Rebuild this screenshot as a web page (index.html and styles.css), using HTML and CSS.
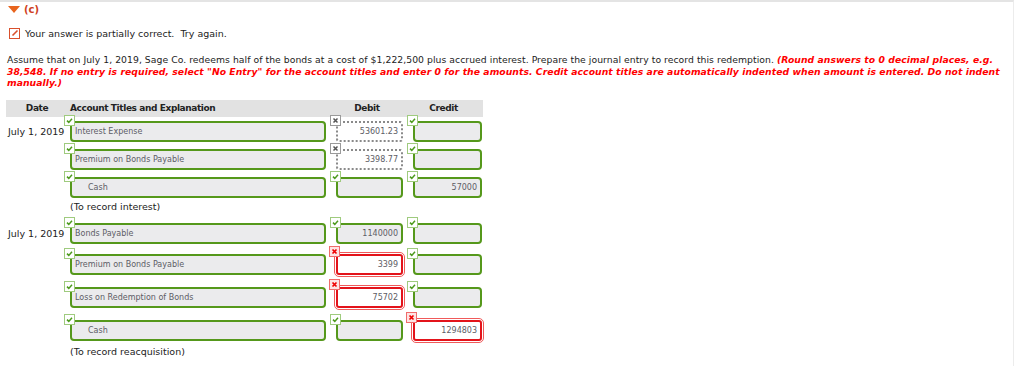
FILE: index.html
```html
<!DOCTYPE html>
<html lang="en">
<head>
    <meta charset="UTF-8">
    <meta name="viewport" content="width=device-width, initial-scale=1.0">
    <title>Question (c)</title>
    <link rel="stylesheet" href="styles.css">
</head>
<body>

    <div class="page">

        <div class="part-head">
            <span class="part-head__caret"></span>
            <span class="part-head__label">(c)</span>
        </div>

        <div class="status">
            <span class="status__icon">
                <svg width="8" height="8" viewBox="0 0 8 8"><path d="M1.5 6.5 L6.5 1.5" stroke="#d9502c" stroke-width="1.6"/></svg>
            </span>
            <span>Your answer is partially correct.&nbsp; Try again.</span>
        </div>

        <p class="prompt">
            Assume that on July 1, 2019, Sage Co. redeems half of the bonds at a cost of $1,222,500 plus accrued interest. Prepare the journal entry to record this redemption.
            <em class="prompt__hint">(Round answers to 0 decimal places, e.g. 38,548. If no entry is required, select "No Entry" for the account titles and enter 0 for the amounts. Credit account titles are automatically indented when amount is entered. Do not indent manually.)</em>
        </p>

        <div class="journal">
            <div class="journal__head">
                <div class="col-date">Date</div>
                <div class="col-acct">Account Titles and Explanation</div>
                <div class="col-debit">Debit</div>
                <div class="col-credit">Credit</div>
            </div>

            <!-- entry 1 -->
            <div class="entry-row">
                <div class="cell-date">July 1, 2019</div>
                <div class="field field--acct">
                    <span class="mark mark--ok"><svg viewBox="0 0 9 9"><path d="M2 4.6 L3.8 6.4 L7 2.8"/></svg></span>
                    <div class="box">Interest Expense</div>
                </div>
                <div class="field field--debit">
                    <span class="mark mark--na"><svg viewBox="0 0 9 9"><path d="M2.5 2.5 L6.5 6.5 M6.5 2.5 L2.5 6.5"/></svg></span>
                    <div class="box box--dotted">53601.23</div>
                </div>
                <div class="field field--credit">
                    <span class="mark mark--ok"><svg viewBox="0 0 9 9"><path d="M2 4.6 L3.8 6.4 L7 2.8"/></svg></span>
                    <div class="box"></div>
                </div>
            </div>
            <div class="entry-row">
                <div class="cell-date"></div>
                <div class="field field--acct">
                    <span class="mark mark--ok"><svg viewBox="0 0 9 9"><path d="M2 4.6 L3.8 6.4 L7 2.8"/></svg></span>
                    <div class="box">Premium on Bonds Payable</div>
                </div>
                <div class="field field--debit">
                    <span class="mark mark--na"><svg viewBox="0 0 9 9"><path d="M2.5 2.5 L6.5 6.5 M6.5 2.5 L2.5 6.5"/></svg></span>
                    <div class="box box--dotted">3398.77</div>
                </div>
                <div class="field field--credit">
                    <span class="mark mark--ok"><svg viewBox="0 0 9 9"><path d="M2 4.6 L3.8 6.4 L7 2.8"/></svg></span>
                    <div class="box"></div>
                </div>
            </div>
            <div class="entry-row">
                <div class="cell-date"></div>
                <div class="field field--acct">
                    <span class="mark mark--ok"><svg viewBox="0 0 9 9"><path d="M2 4.6 L3.8 6.4 L7 2.8"/></svg></span>
                    <div class="box box--indent">Cash</div>
                </div>
                <div class="field field--debit">
                    <span class="mark mark--ok"><svg viewBox="0 0 9 9"><path d="M2 4.6 L3.8 6.4 L7 2.8"/></svg></span>
                    <div class="box"></div>
                </div>
                <div class="field field--credit">
                    <span class="mark mark--ok"><svg viewBox="0 0 9 9"><path d="M2 4.6 L3.8 6.4 L7 2.8"/></svg></span>
                    <div class="box">57000</div>
                </div>
            </div>
            <div class="entry-note">(To record interest)</div>

            <!-- entry 2 -->
            <div class="entry-row">
                <div class="cell-date">July 1, 2019</div>
                <div class="field field--acct">
                    <span class="mark mark--ok"><svg viewBox="0 0 9 9"><path d="M2 4.6 L3.8 6.4 L7 2.8"/></svg></span>
                    <div class="box">Bonds Payable</div>
                </div>
                <div class="field field--debit">
                    <span class="mark mark--ok"><svg viewBox="0 0 9 9"><path d="M2 4.6 L3.8 6.4 L7 2.8"/></svg></span>
                    <div class="box">1140000</div>
                </div>
                <div class="field field--credit">
                    <span class="mark mark--ok"><svg viewBox="0 0 9 9"><path d="M2 4.6 L3.8 6.4 L7 2.8"/></svg></span>
                    <div class="box"></div>
                </div>
            </div>
            <div class="entry-row entry-row--err">
                <div class="cell-date"></div>
                <div class="field field--acct">
                    <span class="mark mark--ok"><svg viewBox="0 0 9 9"><path d="M2 4.6 L3.8 6.4 L7 2.8"/></svg></span>
                    <div class="box">Premium on Bonds Payable</div>
                </div>
                <div class="field field--debit">
                    <span class="mark mark--bad"><svg viewBox="0 0 9 9"><path d="M2.5 2.5 L6.5 6.5 M6.5 2.5 L2.5 6.5"/></svg></span>
                    <div class="box box--wrong">3399</div>
                </div>
                <div class="field field--credit">
                    <span class="mark mark--ok"><svg viewBox="0 0 9 9"><path d="M2 4.6 L3.8 6.4 L7 2.8"/></svg></span>
                    <div class="box"></div>
                </div>
            </div>
            <div class="entry-row entry-row--err">
                <div class="cell-date"></div>
                <div class="field field--acct">
                    <span class="mark mark--ok"><svg viewBox="0 0 9 9"><path d="M2 4.6 L3.8 6.4 L7 2.8"/></svg></span>
                    <div class="box">Loss on Redemption of Bonds</div>
                </div>
                <div class="field field--debit">
                    <span class="mark mark--bad"><svg viewBox="0 0 9 9"><path d="M2.5 2.5 L6.5 6.5 M6.5 2.5 L2.5 6.5"/></svg></span>
                    <div class="box box--wrong">75702</div>
                </div>
                <div class="field field--credit">
                    <span class="mark mark--ok"><svg viewBox="0 0 9 9"><path d="M2 4.6 L3.8 6.4 L7 2.8"/></svg></span>
                    <div class="box"></div>
                </div>
            </div>
            <div class="entry-row entry-row--err">
                <div class="cell-date"></div>
                <div class="field field--acct">
                    <span class="mark mark--ok"><svg viewBox="0 0 9 9"><path d="M2 4.6 L3.8 6.4 L7 2.8"/></svg></span>
                    <div class="box box--indent">Cash</div>
                </div>
                <div class="field field--debit">
                    <span class="mark mark--ok"><svg viewBox="0 0 9 9"><path d="M2 4.6 L3.8 6.4 L7 2.8"/></svg></span>
                    <div class="box"></div>
                </div>
                <div class="field field--credit">
                    <span class="mark mark--bad"><svg viewBox="0 0 9 9"><path d="M2.5 2.5 L6.5 6.5 M6.5 2.5 L2.5 6.5"/></svg></span>
                    <div class="box box--wrong">1294803</div>
                </div>
            </div>
            <div class="entry-note">(To record reacquisition)</div>
        </div>

    </div>

</body>
</html>
```

FILE: styles.css
```css
*,
*::before,
*::after {
    box-sizing: border-box;
}

body {
    font-family: "DejaVu Sans", Verdana, sans-serif;
    font-size: 9.25px;
    color: #222;
    margin: 0;
    padding: 0;
    background-color: #fff;
}

p {
    margin: 0;
}

.page {
    border-top: 2px solid #e4e4e4;
    border-right: 1px solid #ececec;
    width: 1014px;
    height: 366px;
    padding: 0 6px;
}

.part-head {
    display: flex;
    align-items: center;
    gap: 4px;
    height: 14px;
    padding-left: 2px;
}

.part-head__caret {
    width: 0;
    height: 0;
    border-left: 6px solid transparent;
    border-right: 6px solid transparent;
    border-top: 7px solid #e8641e;
}

.part-head__label {
    color: #cf3f22;
    font-weight: bold;
    font-size: 10px;
}

.status {
    display: flex;
    align-items: center;
    gap: 5px;
    margin-top: 10px;
    padding-left: 3px;
    height: 14px;
    font-size: 9.5px;
}

.status__icon {
    width: 11px;
    height: 11px;
    border: 1px solid #d9502c;
    display: flex;
    align-items: center;
    justify-content: center;
}

.prompt {
    margin-top: 14px;
    padding-left: 1px;
    line-height: 11.5px;
    letter-spacing: 0.05px;
}

.prompt__hint {
    color: #f00;
    font-weight: bold;
}

/* journal table */
.journal {
    margin-top: 11px;
}

.journal__head {
    display: flex;
    width: 477px;
    height: 17px;
    line-height: 17px;
    background-color: #e2e2e2;
    font-weight: bold;
    font-size: 9px;
    letter-spacing: -0.4px;
    margin-bottom: -3px;
}

.col-date {
    width: 62px;
    text-align: center;
}

.col-acct {
    width: 262px;
    padding-left: 2px;
}

.col-debit {
    width: 74px;
    text-align: center;
}

.col-credit {
    width: 79px;
    text-align: center;
}

.entry-row {
    display: flex;
    margin-top: 1px;
}

.entry-row--err {
    padding: 3px 0 2px;
}

.cell-date {
    width: 58px;
    padding: 6px 0 0 2px;
    line-height: 21px;
    font-size: 9.5px;
    white-space: nowrap;
}

.field {
    position: relative;
    padding: 6px 0 0 6px;
    margin-left: 4px;
}

.field--acct {
    margin-left: 0;
}

.field--acct .box {
    width: 256px;
}

.field--debit .box {
    width: 67px;
    text-align: right;
}

.field--credit .box {
    width: 69px;
    text-align: right;
}

.box {
    height: 21px;
    line-height: 17px;
    padding: 0 3px;
    border: 2px solid #55981b;
    border-radius: 4px;
    background-color: #ebebed;
    color: #5d5d66;
    font-size: 8px;
    white-space: nowrap;
    overflow: hidden;
}

.box--indent {
    padding-left: 16px;
}

.box--dotted {
    border: 2px dotted #8a8a8a;
    border-radius: 3px;
    background-color: #fff;
}

.box--wrong {
    border-color: #e3141b;
    border-radius: 3px;
    background-color: #fff;
    outline: 1px solid #f05a5a;
    outline-offset: 1px;
}

.mark {
    position: absolute;
    left: 0;
    top: 0;
    width: 11px;
    height: 11px;
    border: 1px solid #9fcb7e;
    background-color: #fff;
    z-index: 2;
}

.mark svg {
    display: block;
    width: 9px;
    height: 9px;
    fill: none;
    stroke-width: 1.5;
}

.mark--ok svg {
    stroke: #4c9a1c;
}

.mark--na {
    border-color: #9a9a9a;
}

.mark--na svg {
    stroke: #555;
}

.mark--bad {
    border-color: #f06b6b;
    background-color: #fde3e3;
    top: -2px;
    left: -1px;
}

.mark--bad svg {
    stroke: #e00;
    stroke-width: 1.7;
}

.entry-note {
    padding-left: 64px;
    height: 18px;
    line-height: 18px;
    font-size: 9.5px;
}
```
